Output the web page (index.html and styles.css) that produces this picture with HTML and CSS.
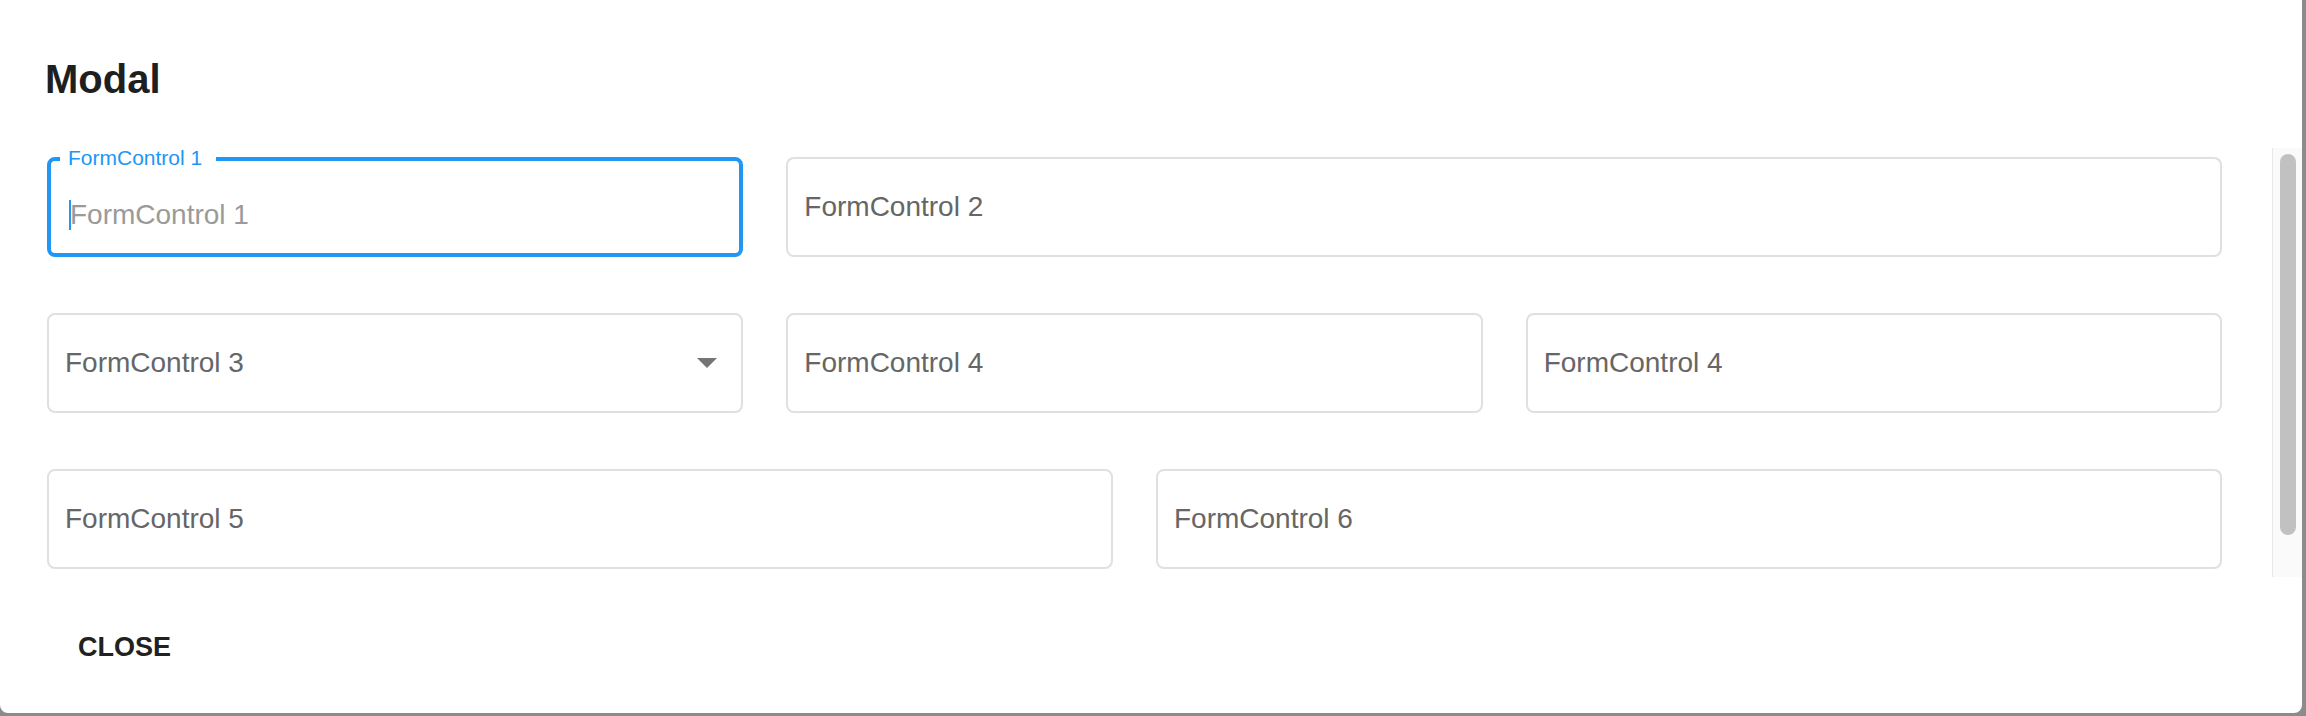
FILE: index.html
```html
<!DOCTYPE html>
<html lang="en">
<head>
<meta charset="utf-8">
<title>Modal</title>
<link rel="stylesheet" href="styles.css">
</head>
<body>
<div class="dialog">
  <h2 class="title">Modal</h2>
  <div class="content">
    <div class="form-grid">
      <div class="field span-2 focused">
        <span class="float-label">FormControl 1</span>
        <span class="caret"></span><span class="placeholder">FormControl 1</span>
      </div>
      <div class="field span-4"><span class="value">FormControl 2</span></div>
      <div class="field span-2 select">
        <span class="value">FormControl 3</span>
        <svg class="arrow" width="20" height="10" viewBox="0 0 20 10"><polygon points="0,0 20,0 10,10" fill="#757575"/></svg>
      </div>
      <div class="field span-2"><span class="value">FormControl 4</span></div>
      <div class="field span-2"><span class="value">FormControl 4</span></div>
      <div class="field span-3"><span class="value">FormControl 5</span></div>
      <div class="field span-3"><span class="value">FormControl 6</span></div>
    </div>
    <div class="scrollbar"><div class="thumb"></div></div>
  </div>
  <div class="actions"><button class="btn" type="button">CLOSE</button></div>
</div>
</body>
</html>
```

FILE: styles.css
```css
html, body {
  margin: 0;
  padding: 0;
}
body {
  background: #8b8b8b;
  font-family: "Liberation Sans", Arial, Helvetica, sans-serif;
  width: 2306px;
  height: 716px;
  overflow: hidden;
}
.dialog {
  width: 2302px;
  height: 713px;
  background: #ffffff;
  border-radius: 0 0 8px 8px;
  display: flex;
  flex-direction: column;
  box-sizing: border-box;
}
.title {
  margin: 0;
  padding: 55px 47px 45px 45px;
  font-size: 40px;
  line-height: 48px;
  font-weight: 700;
  color: #1f1f1f;
}
.content {
  display: flex;
  height: 429px;
  flex: 0 0 429px;
}
.form-grid {
  flex: 1;
  display: grid;
  grid-template-columns: repeat(6, minmax(0, 1fr));
  grid-auto-rows: 100px;
  column-gap: 43px;
  row-gap: 56px;
  padding: 9px 50px 0 47px;
  align-content: start;
}
.span-2 { grid-column: span 2; }
.span-3 { grid-column: span 3; }
.span-4 { grid-column: span 4; }
.field {
  position: relative;
  box-sizing: border-box;
  min-width: 0;
  border: 2px solid #e0e0e0;
  border-radius: 8px;
  padding: 0 16px;
  display: flex;
  align-items: center;
  font-size: 28px;
  line-height: 34px;
  color: #666666;
}
.field.focused {
  border: 4px solid #2196f3;
  padding: 15px 16px 0 18px;
}
.float-label {
  position: absolute;
  top: -15px;
  left: 9px;
  padding: 0 14px 0 8px;
  background: #ffffff;
  color: #2196f3;
  font-size: 21px;
  line-height: 24px;
}
.caret {
  display: inline-block;
  width: 2px;
  height: 30px;
  background: #2196f3;
  margin-right: -1px;
  flex: 0 0 auto;
}
.placeholder {
  color: #9a9a9a;
}
.select .arrow {
  margin-left: auto;
  margin-right: 8px;
  flex: 0 0 auto;
}
.scrollbar {
  width: 30px;
  flex: 0 0 30px;
  box-sizing: border-box;
  background: #fafafa;
  box-shadow: inset 1px 0 0 #e8e8e8;
  padding: 6px 6px 0 8px;
}
.thumb {
  height: 381px;
  background: #c1c1c1;
  border-radius: 8px;
}
.actions {
  display: flex;
  padding: 38px 47px 0 47px;
}
.btn {
  background: none;
  border: 0;
  margin: 0;
  padding: 12px 31px;
  font-family: "Liberation Sans", Arial, Helvetica, sans-serif;
  font-size: 27px;
  line-height: 40px;
  font-weight: 700;
  color: #212121;
  cursor: pointer;
}
```
